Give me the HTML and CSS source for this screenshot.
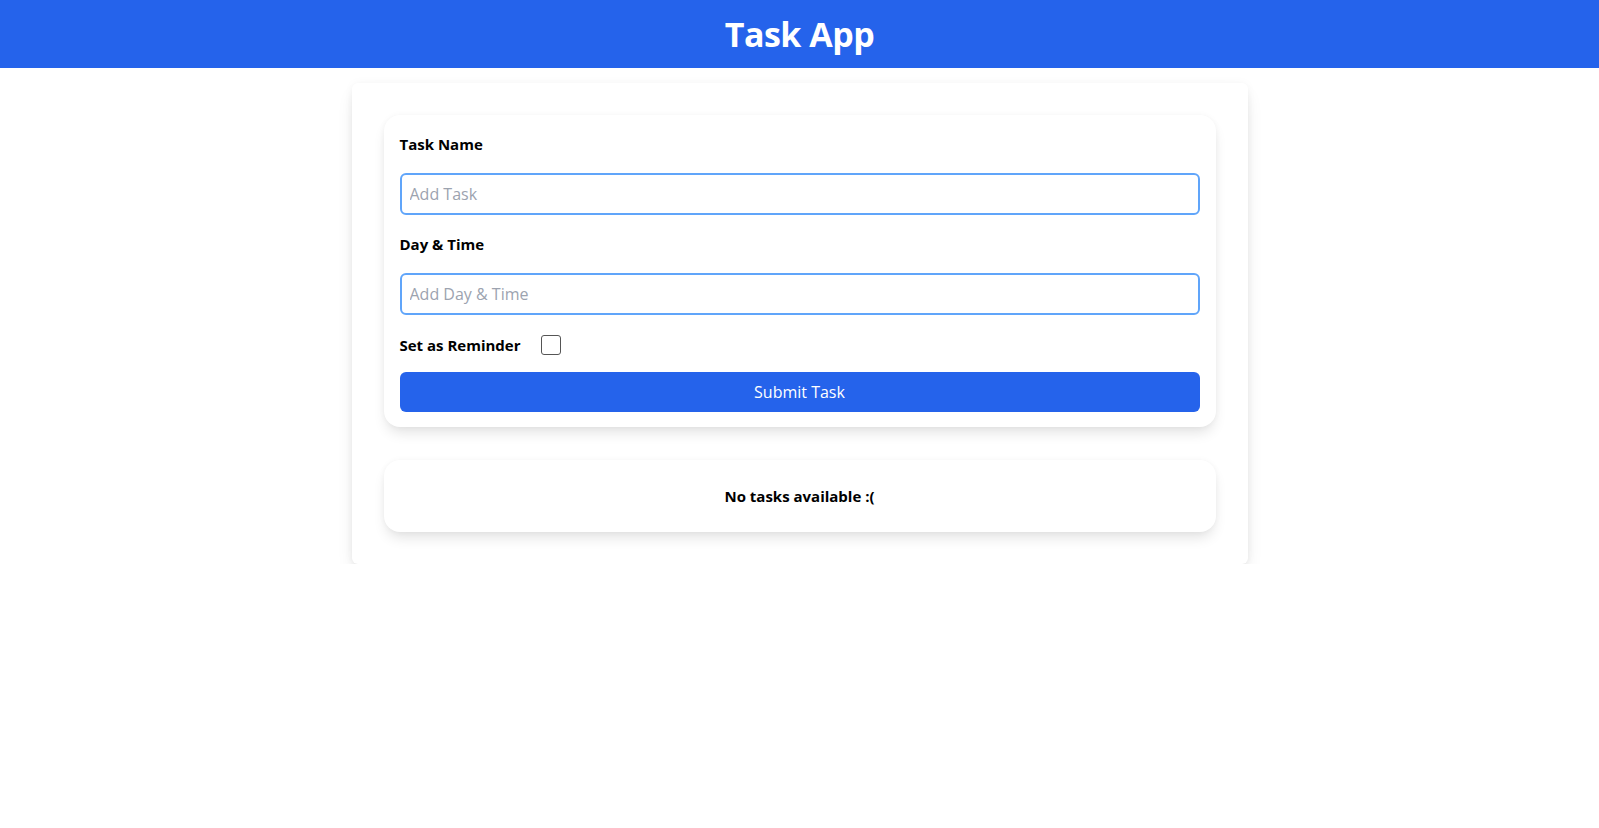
FILE: index.html
```html
<!DOCTYPE html>
<html lang="en">
<head>
    <meta charset="UTF-8">
    <meta name="viewport" content="width=device-width, initial-scale=1.0">
    <title>Task App</title>
    <link rel="stylesheet" href="styles.css">
</head>
<body>
    <header class="app-header">
        <h1>Task App</h1>
    </header>
    <main class="container">
        <form class="card task-form">
            <div class="field">
                <label for="task">Task Name</label>
                <input type="text" id="task" placeholder="Add Task">
            </div>
            <div class="field">
                <label for="day">Day &amp; Time</label>
                <input type="text" id="day" placeholder="Add Day &amp; Time">
            </div>
            <div class="field field-check">
                <label for="reminder">Set as Reminder</label>
                <input type="checkbox" id="reminder">
            </div>
            <button type="submit">Submit Task</button>
        </form>
        <div class="card task-list">
            <p class="empty">No tasks available :(</p>
        </div>
    </main>
</body>
</html>
```

FILE: styles.css
```css
body {
    font-family: "Open Sans", "Noto Sans", sans-serif;
    background: #fff;
    color: #000;
    margin: 0;
    padding: 0;
}
.app-header {
    background: #2563eb;
    height: 68px;
    display: flex;
    align-items: center;
    justify-content: center;
}
.app-header h1 {
    margin: 0;
    color: #fff;
    font-size: 34px;
    font-weight: 700;
    letter-spacing: -0.5px;
}
.container {
    width: 896px;
    box-sizing: border-box;
    margin: 15px auto 0;
    padding: 32px;
    background: #fff;
    border-radius: 6px;
    box-shadow: 0 10px 18px -3px rgba(0, 0, 0, 0.1), 0 4px 8px -4px rgba(0, 0, 0, 0.1), 0 0 10px rgba(0, 0, 0, 0.04);
}
.card {
    background: #fff;
    border-radius: 16px;
    box-shadow: 0 8px 14px -3px rgba(0, 0, 0, 0.12), 0 0 6px rgba(0, 0, 0, 0.04);
}
.task-form {
    padding: 18px 16px 15px;
}
.field {
    margin-bottom: 18px;
}
.field label {
    display: block;
    font-size: 15px;
    font-weight: 700;
    line-height: 22px;
    margin-bottom: 18px;
}
.field input[type="text"] {
    display: block;
    width: 100%;
    box-sizing: border-box;
    height: 42px;
    padding: 0 8px;
    border: 2px solid #60a5fa;
    border-radius: 6px;
    font-family: inherit;
    font-size: 16px;
    outline: none;
}
.field input::placeholder {
    color: #9ca3af;
}
.field-check {
    display: flex;
    align-items: center;
    height: 24px;
    margin-bottom: 15px;
}
.field-check label {
    margin: 0 20px 0 0;
}
.field-check input {
    width: 20px;
    height: 20px;
    margin: 0;
    appearance: none;
    border: 1px solid #555;
    border-radius: 3px;
    background: #fff;
}
button {
    display: block;
    width: 100%;
    height: 40px;
    border: none;
    border-radius: 6px;
    background: #2563eb;
    color: #fff;
    font-family: inherit;
    font-size: 16px;
}
.task-list {
    margin-top: 33px;
    height: 72px;
    display: flex;
    align-items: center;
    justify-content: center;
}
.empty {
    margin: 0;
    font-size: 15px;
    font-weight: 700;
}
```
